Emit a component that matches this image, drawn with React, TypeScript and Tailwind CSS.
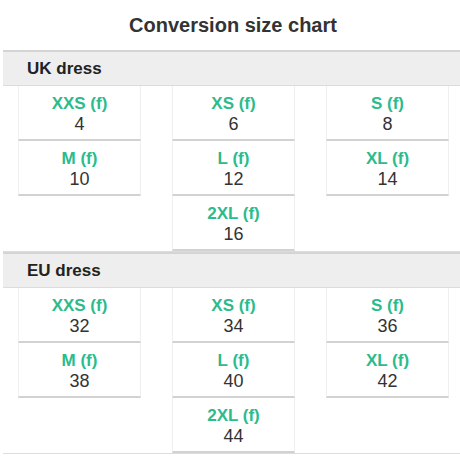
import React from "react";

type Item = { label: string; value: string };

const uk: Item[] = [
  { label: "XXS (f)", value: "4" },
  { label: "XS (f)", value: "6" },
  { label: "S (f)", value: "8" },
  { label: "M (f)", value: "10" },
  { label: "L (f)", value: "12" },
  { label: "XL (f)", value: "14" },
  { label: "2XL (f)", value: "16" },
];

const eu: Item[] = [
  { label: "XXS (f)", value: "32" },
  { label: "XS (f)", value: "34" },
  { label: "S (f)", value: "36" },
  { label: "M (f)", value: "38" },
  { label: "L (f)", value: "40" },
  { label: "XL (f)", value: "42" },
  { label: "2XL (f)", value: "44" },
];

function Section({ title, items }: { title: string; items: Item[] }) {
  return (
    <div className="border-b border-[#dddddd]">
      <div className="border-t-2 border-[#d4d4d4] border-b border-b-[#dcdcdc] bg-[#eeeeee] h-[36px] flex items-center pl-[24px] text-[17px] font-bold text-[#222222]">
        {title}
      </div>
      <div className="grid grid-cols-[repeat(3,123px)] gap-x-[31px] pl-[15px]">
        {items.map((it, i) => (
          <div
            key={i}
            className={
              "h-[55px] pt-[8px] pb-[5px] border-b-2 border-b-[#d2d2d2] border-x border-x-[#f0f0f0] text-center leading-[20px] " +
              (i === 6 ? "col-start-2" : "")
            }
          >
            <div className="font-bold text-[17px] text-[#2bbb8c]">{it.label}</div>
            <div className="text-[18px] text-[#333333]">{it.value}</div>
          </div>
        ))}
      </div>
    </div>
  );
}

export default function App() {
  return (
    <div className="w-[460px] h-[460px] bg-white overflow-hidden" style={{ fontFamily: '"Liberation Sans", Arial, sans-serif' }}>
      <div className="ml-[3px] w-[457px]">
        <div className="pt-[13px] pb-[13px] pl-[3px] text-center text-[20px] leading-[24px] font-bold text-[#333333]">
          Conversion size chart
        </div>
        <Section title="UK dress" items={uk} />
        <Section title="EU dress" items={eu} />
      </div>
    </div>
  );
}
